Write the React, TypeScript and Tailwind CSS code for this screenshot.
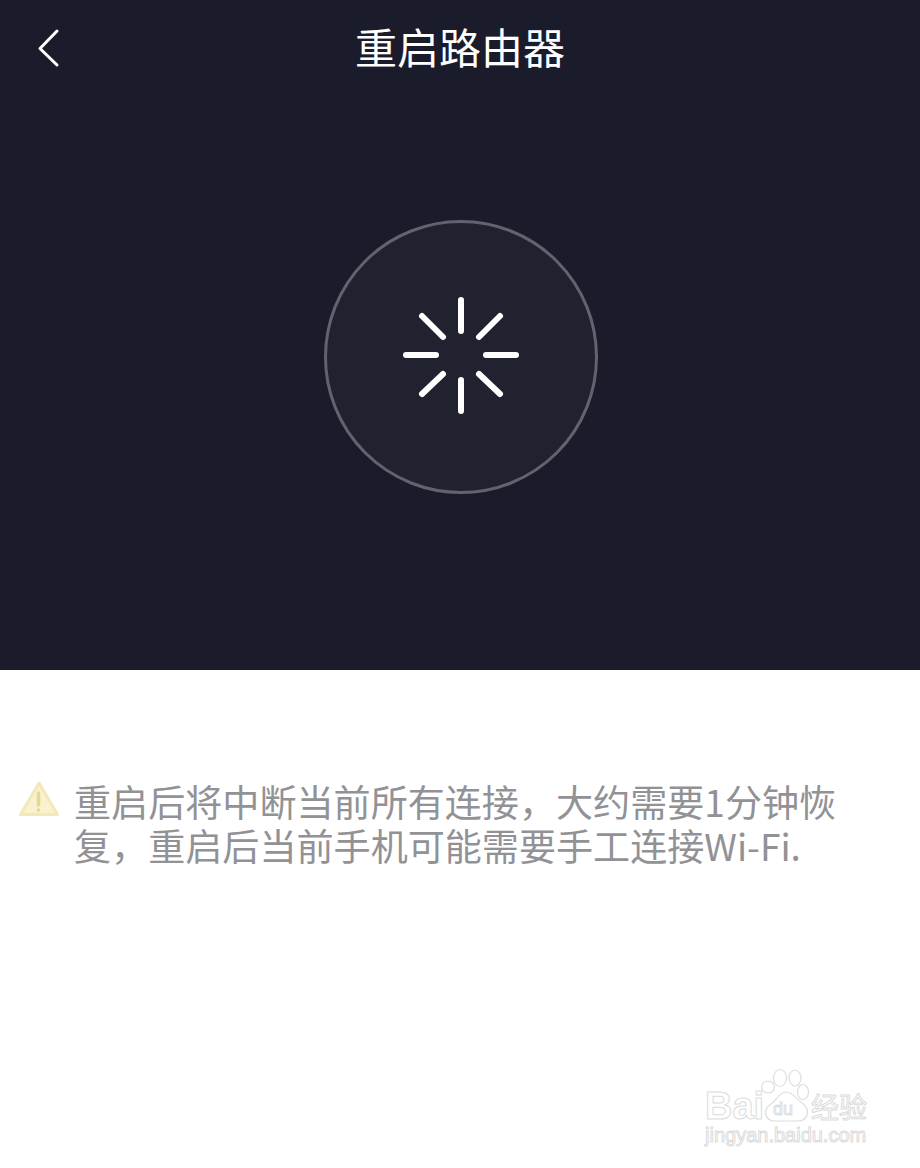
const CJK = "font-['Noto_Sans_CJK_SC','Noto_Sans',sans-serif]";

function Spinner() {
    const lines = [
        [461, 300, 461, 331],
        [461, 380, 461, 411],
        [406, 355, 436, 355],
        [486, 355, 516, 355],
        [422, 316, 443, 337],
        [479, 337, 500, 316],
        [422, 394, 443, 374],
        [479, 374, 500, 394],
    ];
    return (
        <svg viewBox="400 296 122 122" className="w-[122px] h-[122px]" fill="none" stroke="#ffffff" strokeWidth="6" strokeLinecap="round">
            {lines.map((l, i) => (
                <line key={i} x1={l[0]} y1={l[1]} x2={l[2]} y2={l[3]} />
            ))}
        </svg>
    );
}

function WarnIcon() {
    return (
        <svg viewBox="0 0 42 38" className="w-[42px] h-[38px] shrink-0 mt-[1px]">
            <path d="M21 3 L39.5 34.5 H2.5 Z" fill="#f9f1cf" stroke="#f3e9b8" strokeWidth="3" strokeLinejoin="round" />
            <line x1="20.5" y1="13" x2="20.5" y2="25" stroke="#e8d88f" strokeWidth="3.5" strokeLinecap="round" />
            <circle cx="20.5" cy="30" r="1.8" fill="#e8d88f" />
        </svg>
    );
}

function Watermark() {
    const outline = "text-white [-webkit-text-stroke:1px_#dcdcdc]";
    return (
        <div className="absolute left-[704px] top-[1068px] w-[170px] h-[80px]">
            <span className={`absolute left-[1px] top-[16px] text-[38px] leading-[44px] font-bold font-['Liberation_Sans',sans-serif] ${outline}`}>Bai</span>
            <svg viewBox="0 0 52 56" className="absolute left-[56px] top-0 w-[52px] h-[56px]" fill="#ffffff" stroke="#dedede" strokeWidth="1.2">
                <ellipse cx="8" cy="19" rx="6.5" ry="6" />
                <ellipse cx="20" cy="10" rx="6.5" ry="8.5" />
                <ellipse cx="35" cy="10" rx="6" ry="8" />
                <ellipse cx="43" cy="24" rx="5.5" ry="7.5" />
                <path d="M26 24 C33 24 36 31 42 35 C51 41 48 53 38 53 H15 C5 53 2 42 11 36 C17 32 19 24 26 24 Z" />
            </svg>
            <span className={`absolute left-[69px] top-[31px] text-[18px] leading-[20px] font-['Liberation_Sans',sans-serif] ${outline} [-webkit-text-stroke:0.7px_#dcdcdc]`}>du</span>
            <span className={`absolute left-[107px] top-[19px] text-[28px] leading-[38px] whitespace-nowrap ${CJK} ${outline}`}>经验</span>
            <span className={`absolute left-[1px] top-[55px] text-[20px] leading-[24px] whitespace-nowrap font-['Liberation_Sans',sans-serif] ${outline} [-webkit-text-stroke:0.7px_#e0e0e0]`}>jingyan.baidu.com</span>
        </div>
    );
}

export default function App() {
    return (
        <div className={`relative w-[920px] h-[1168px] overflow-hidden bg-white ${CJK}`}>
            <section className="h-[670px] bg-[#1a1c2c] flex flex-col items-center">
                <header className="w-full h-[96px] grid grid-cols-[1fr_auto_1fr] items-center">
                    <svg viewBox="0 0 24 40" className="w-[24px] h-[40px] ml-[37px]" fill="none" stroke="#ffffff" strokeWidth="3" strokeLinecap="round" strokeLinejoin="round">
                        <path d="M20 3 L3 20.5 L20 37" />
                    </svg>
                    <h1 className="text-[42px] leading-[60px] font-normal text-white pb-[4px]">重启路由器</h1>
                    <div />
                </header>
                <div className="mt-[124px] ml-[2px] w-[274px] h-[274px] rounded-full border-[3px] border-[#62636f] bg-[#20222f] flex items-center justify-center">
                    <Spinner />
                </div>
            </section>
            <div className="mt-[109px] pl-[18px] flex items-start gap-[14px]">
                <WarnIcon />
                <p className="w-[782px] text-[37.1px] leading-[44px] text-[#929296]">
                    重启后将中断当前所有连接，大约需要1分钟恢复，重启后当前手机可能需要手工连接Wi-Fi.
                </p>
            </div>
            <Watermark />
        </div>
    );
}
